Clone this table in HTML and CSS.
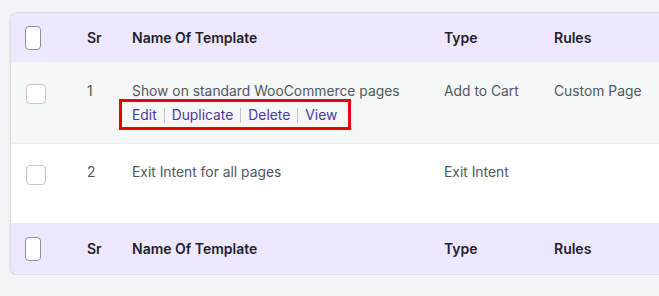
FILE: index.html
```html
<!DOCTYPE html>
<html>
<head>
<meta charset="utf-8">
<link rel="stylesheet" href="styles.css">
</head>
<body>
<div class="card">
  <table class="grid">
    <colgroup>
      <col class="c-check"><col class="c-sr"><col class="c-name"><col class="c-type"><col class="c-rules">
    </colgroup>
    <thead>
      <tr class="head">
        <th><span class="hbox"></span></th>
        <th>Sr</th>
        <th>Name Of Template</th>
        <th>Type</th>
        <th>Rules</th>
      </tr>
    </thead>
    <tbody>
      <tr class="row alt">
        <td><span class="rbox"></span></td>
        <td class="num">1</td>
        <td>
          <div class="title">Show on standard WooCommerce pages</div>
          <div class="actions">
            <a class="act">Edit</a><span class="sep"></span><a class="act">Duplicate</a><span class="sep"></span><a class="act">Delete</a><span class="sep"></span><a class="act">View</a>
          </div>
        </td>
        <td>Add to Cart</td>
        <td>Custom Page</td>
      </tr>
      <tr class="row">
        <td><span class="rbox"></span></td>
        <td class="num">2</td>
        <td><div class="title">Exit Intent for all pages</div></td>
        <td>Exit Intent</td>
        <td></td>
      </tr>
    </tbody>
    <tfoot>
      <tr class="head foot">
        <th><span class="hbox"></span></th>
        <th>Sr</th>
        <th>Name Of Template</th>
        <th>Type</th>
        <th>Rules</th>
      </tr>
    </tfoot>
  </table>
</div>
</body>
</html>
```
FILE: styles.css
```css
html, body {
  margin: 0;
  padding: 0;
  background: #f4f3f8;
  font-family: Inter, "Noto Sans", sans-serif;
  overflow: hidden;
}
body {
  padding: 12px 0 0 10px;
}
.card {
  width: calc(100vw - 11px);
  background: #fff;
  border: 1px solid #dcdce0;
  border-right: 0;
  border-radius: 8px 0 0 8px;
  box-shadow: 0 1px 2px rgba(0,0,0,0.12);
  overflow: hidden;
}
.grid {
  border-collapse: collapse;
  table-layout: fixed;
  width: 100%;
}
.c-check { width: 76px; }
.c-sr { width: 45px; }
.c-name { width: 312px; }
.c-type { width: 110px; }
.c-rules { width: auto; }
th, td {
  padding: 0;
  text-align: left;
  font-size: 13.85px;
  line-height: 20px;
  white-space: nowrap;
}
th:first-child, td:first-child {
  padding-left: 14px;
}
.head {
  background: #eee8fe;
  height: 49px;
}
.head th {
  font-weight: 600;
  color: #1d2230;
  vertical-align: middle;
  font-size: 14px;
}
.foot {
  height: 51px;
}
.hbox {
  display: block;
  width: 14px;
  height: 22px;
  border: 1px solid #8c8f94;
  border-radius: 4px;
  background: #fff;
}
.row td {
  vertical-align: top;
  color: #50575e;
  padding-top: 19px;
}
.row {
  height: 81px;
  border-bottom: 1px solid #ececef;
}
.row + .row td { padding-top: 18px; }
.row + .row { height: 80px; border-bottom: 0; }
.alt { background: #f6f7f7; }
.rbox {
  display: block;
  margin-top: 3px;
  margin-left: 1px;
  width: 18px;
  height: 18px;
  border: 1px solid #c3c4c7;
  border-radius: 4px;
  background: #fff;
}
.num { color: #50575e; }
.actions {
  display: inline-flex;
  align-items: center;
  margin: -2px 0 0 -13px;
  padding: 3px 11px 2px 10px;
  border: 3px solid #e8000b;
}
.act {
  color: #463b9f;
  font-size: 13.85px;
  line-height: 20px;
}
.sep {
  display: inline-block;
  width: 1px;
  height: 15px;
  background: #c3c4c7;
  margin: 0 7px 0 7px;
}
```
